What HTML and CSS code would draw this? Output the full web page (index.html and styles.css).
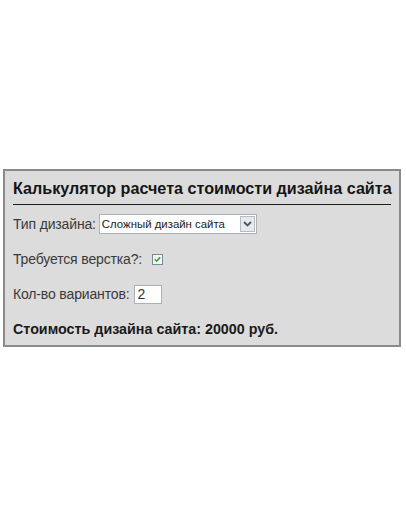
FILE: index.html
```html
<!DOCTYPE html>
<html lang="ru">
<head>
<meta charset="utf-8">
<title>Калькулятор</title>
<link rel="stylesheet" href="styles.css">
</head>
<body>
<div class="panel">
  <h1 class="title">Калькулятор расчета стоимости дизайна сайта</h1>
  <div class="rows">
    <div class="row">
      <span class="label gap-select">Тип дизайна:</span>
      <div class="select">
        <span class="select-text">Сложный дизайн сайта</span>
        <span class="select-btn">
          <svg width="9" height="6" viewBox="0 0 9 6"><path d="M1 1 L4.5 4.5 L8 1" fill="none" stroke="#4d5666" stroke-width="1.8"/></svg>
        </span>
      </div>
    </div>
    <div class="row">
      <span class="label gap-check">Требуется верстка?:</span>
      <span class="check">
        <svg width="11" height="11" viewBox="0 0 11 11"><rect x="0.5" y="0.5" width="10" height="10" fill="#f4f6f4" stroke="#7a8a9c"/><path d="M2.8 5.3 L4.6 7.2 L8.2 3.4" fill="none" stroke="#2fa52f" stroke-width="1.6"/></svg>
      </span>
    </div>
    <div class="row">
      <span class="label gap-input">Кол-во вариантов:</span>
      <span class="input">2</span>
    </div>
    <div class="row result">Стоимость дизайна сайта: 20000 руб.</div>
  </div>
</div>
</body>
</html>
```
FILE: styles.css
```css
html, body {
  margin: 0;
  padding: 0;
  background: #ffffff;
}
body {
  font-family: "Liberation Sans", Arial, sans-serif;
}
.panel {
  margin: 169px 0 0 3px;
  width: 378px;
  border: 2px solid #8a8a8a;
  background: #dcdcdc;
  padding: 8px 8px 6px 8px;
}
.title {
  margin: 0;
  font-size: 16.15px;
  line-height: 18px;
  font-weight: bold;
  color: #151515;
  padding-bottom: 7px;
  border-bottom: 1px solid #1e1e1e;
  white-space: nowrap;
}
.rows {
  margin-top: 9px;
  display: flex;
  flex-direction: column;
  gap: 15px;
}
.row {
  display: flex;
  align-items: center;
  height: 20px;
}
.label {
  font-size: 14px;
  letter-spacing: -0.15px;
  color: #3a3a3a;
}
.gap-select {
  margin-right: 3px;
}
.gap-check {
  margin-right: 10px;
}
.gap-input {
  margin-right: 5px;
}
.select {
  display: flex;
  align-items: center;
  width: 156px;
  height: 18px;
  border: 1px solid #a9b1bb;
  background: #ffffff;
}
.select-text {
  flex: 1;
  font-size: 11.4px;
  color: #222;
  padding-left: 2px;
}
.select-btn {
  width: 13px;
  height: 14px;
  margin-right: 1px;
  border: 1px solid #b6bcc6;
  background: #e6e9ee;
  display: flex;
  align-items: center;
  justify-content: center;
}
.check {
  display: flex;
}
.input {
  width: 24px;
  height: 17px;
  border: 1px solid #a9b1bb;
  background: #ffffff;
  font-size: 14px;
  line-height: 17px;
  color: #333;
  padding-left: 2px;
}
.result {
  font-size: 14.3px;
  font-weight: bold;
  color: #1a1a1a;
}
```
